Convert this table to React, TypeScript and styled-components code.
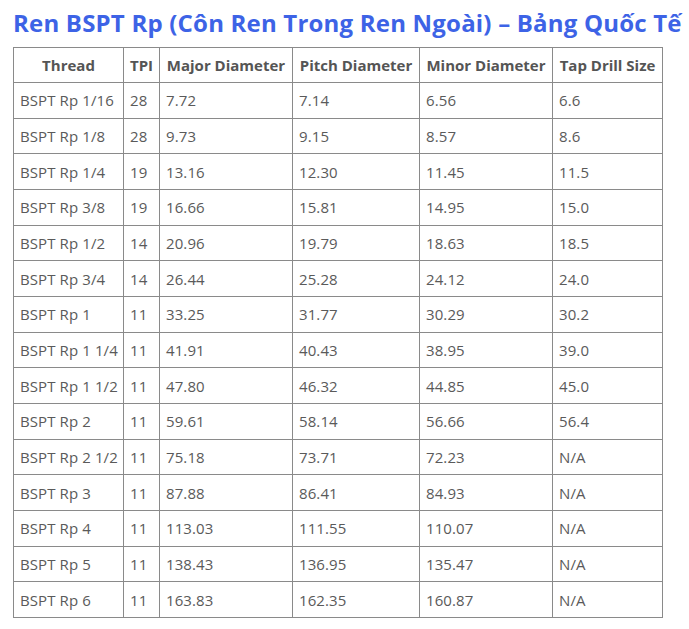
import React from "react";
import styled, { createGlobalStyle } from "styled-components";

const GlobalStyle = createGlobalStyle`
  html, body {
    margin: 0;
    padding: 0;
    background: #ffffff;
  }
  body {
    font-family: "Open Sans", "Liberation Sans", sans-serif;
  }
`;

const Page = styled.div`
  padding: 7px 13px 0 13px;
  width: 689px;
  box-sizing: border-box;
`;

const Title = styled.h2`
  margin: 0 0 9px 0;
  font-family: "Open Sans", "Liberation Sans", sans-serif;
  font-size: 24px;
  line-height: 31px;
  font-weight: 700;
  color: #3d63e6;
  white-space: nowrap;
  letter-spacing: 0.2px;
`;

const Table = styled.table`
  width: 649px;
  table-layout: fixed;
  border-collapse: collapse;
  color: #5a5a5a;
  font-size: 15px;
`;

const Row = styled.tr<{ $head?: boolean }>`
  height: ${(p) => (p.$head ? "35px" : "35.67px")};
`;

const HeadCell = styled.th`
  border: 1px solid #8a8a8a;
  padding: 0 2px;
  font-size: 15px;
  font-weight: 700;
  text-align: center;
  white-space: nowrap;
  color: #555555;
`;

const Cell = styled.td`
  border: 1px solid #8a8a8a;
  padding: 0 6px;
  text-align: left;
  white-space: nowrap;
  font-weight: 400;
  letter-spacing: 0.1px;
`;

const columns = [
  { name: "Thread", width: 110 },
  { name: "TPI", width: 36 },
  { name: "Major Diameter", width: 133 },
  { name: "Pitch Diameter", width: 127 },
  { name: "Minor Diameter", width: 133 },
  { name: "Tap Drill Size", width: 110 },
];

const rows: string[][] = [
  ["BSPT Rp 1/16", "28", "7.72", "7.14", "6.56", "6.6"],
  ["BSPT Rp 1/8", "28", "9.73", "9.15", "8.57", "8.6"],
  ["BSPT Rp 1/4", "19", "13.16", "12.30", "11.45", "11.5"],
  ["BSPT Rp 3/8", "19", "16.66", "15.81", "14.95", "15.0"],
  ["BSPT Rp 1/2", "14", "20.96", "19.79", "18.63", "18.5"],
  ["BSPT Rp 3/4", "14", "26.44", "25.28", "24.12", "24.0"],
  ["BSPT Rp 1", "11", "33.25", "31.77", "30.29", "30.2"],
  ["BSPT Rp 1 1/4", "11", "41.91", "40.43", "38.95", "39.0"],
  ["BSPT Rp 1 1/2", "11", "47.80", "46.32", "44.85", "45.0"],
  ["BSPT Rp 2", "11", "59.61", "58.14", "56.66", "56.4"],
  ["BSPT Rp 2 1/2", "11", "75.18", "73.71", "72.23", "N/A"],
  ["BSPT Rp 3", "11", "87.88", "86.41", "84.93", "N/A"],
  ["BSPT Rp 4", "11", "113.03", "111.55", "110.07", "N/A"],
  ["BSPT Rp 5", "11", "138.43", "136.95", "135.47", "N/A"],
  ["BSPT Rp 6", "11", "163.83", "162.35", "160.87", "N/A"],
];

export default function App() {
  return (
    <Page>
      <GlobalStyle />
      <Title>Ren BSPT Rp (Côn Ren Trong Ren Ngoài) – Bảng Quốc Tế</Title>
      <Table>
        <colgroup>
          {columns.map((c) => (
            <col key={c.name} style={{ width: c.width }} />
          ))}
        </colgroup>
        <thead>
          <Row $head>
            {columns.map((c) => (
              <HeadCell key={c.name}>{c.name}</HeadCell>
            ))}
          </Row>
        </thead>
        <tbody>
          {rows.map((r) => (
            <Row key={r[0]}>
              {r.map((v, i) => (
                <Cell key={i}>{v}</Cell>
              ))}
            </Row>
          ))}
        </tbody>
      </Table>
    </Page>
  );
}
